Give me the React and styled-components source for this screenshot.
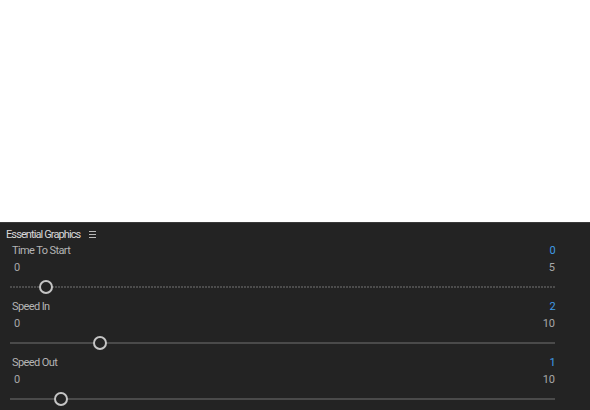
import React from 'react';
import styled, {createGlobalStyle} from "styled-components";

const sliders = [
    {label: "Time To Start", value: 0, min: 0, max: 5, thumb: 29, dotted: true},
    {label: "Speed In", value: 2, min: 0, max: 10, thumb: 83},
    {label: "Speed Out", value: 1, min: 0, max: 10, thumb: 44},
]

const App = () => {
    return (
        <>
            <GlobalStyle/>
            <Page>
                <Blank/>
                <Panel>
                    <Title>
                        Essential Graphics
                        <Menu><span/><span/><span/></Menu>
                    </Title>
                    {sliders.map(s => (
                        <Control key={s.label}>
                            <Row>
                                <Label>{s.label}</Label>
                                <Value>{s.value}</Value>
                            </Row>
                            <RangeRow>
                                <span>{s.min}</span>
                                <span>{s.max}</span>
                            </RangeRow>
                            <Track dotted={s.dotted}>
                                <Thumb style={{left: s.thumb}}/>
                            </Track>
                        </Control>
                    ))}
                </Panel>
            </Page>
        </>
    );
};

//-----------Global---------
const GlobalStyle = createGlobalStyle`
body {
margin:0;
background:#ffffff;
font-family: Roboto, "Liberation Sans", sans-serif;
}
`
const Page = styled.div`
display:flex;
flex-direction:column;
width:590px;
height:410px;
overflow:hidden;
`
const Blank = styled.div`
height:222px;
flex-shrink:0;
background:#ffffff;
`
const Panel = styled.div`
flex:1;
background:#232323;
border-top:1px solid #3a3a3a;
padding:4px 35px 0 12px;
display:flex;
flex-direction:column;
`
const Title = styled.div`
display:flex;
align-items:center;
margin-left:-6px;
margin-bottom:2px;
height:14px;
font-size:11px;
letter-spacing:-0.9px;
color:#d8d8d8;
`
const Menu = styled.div`
display:flex;
flex-direction:column;
gap:2px;
margin-left:9px;
span {
display:block;
width:7px;
height:1px;
background:#b8b8b8;
}
`
//-----------Slider---------
const Control = styled.div`
display:flex;
flex-direction:column;
gap:1px;
margin-bottom:2px;
`
const Row = styled.div`
display:flex;
justify-content:space-between;
line-height:16px;
font-size:11px;
letter-spacing:-0.6px;
`
const Label = styled.span`
color:#b4b4b4;
`
const Value = styled.span`
color:#3f9be6;
`
const RangeRow = styled.div`
display:flex;
justify-content:space-between;
padding-left:2px;
line-height:16px;
font-size:11px;
color:#a8a8a8;
`
const Track = styled.div`
position:relative;
height:20px;
margin-left:-2px;
&::before {
content:"";
position:absolute;
left:0;
right:0;
top:9px;
height:2px;
background:${p => p.dotted
    ? "repeating-linear-gradient(90deg, #4c4c4c 0 2px, transparent 2px 3px)"
    : "#4a4a4a"};
}
`
const Thumb = styled.div`
position:absolute;
top:3px;
width:10px;
height:10px;
border-radius:50%;
border:2px solid #c4c4c4;
background:#232323;
`

export default App;
